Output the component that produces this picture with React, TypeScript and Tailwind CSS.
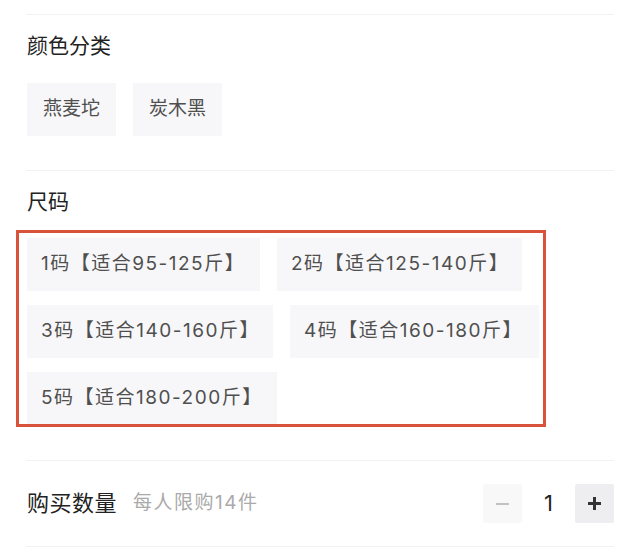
import React from "react";

const FONT = { fontFamily: 'Inter, "Noto Sans CJK SC", "Noto Sans", sans-serif' };

const sizes: { label: string; w: string }[] = [
  { label: "1码【适合95-125斤】", w: "w-[233px]" },
  { label: "2码【适合125-140斤】", w: "w-[245px]" },
  { label: "3码【适合140-160斤】", w: "w-[246px]" },
  { label: "4码【适合160-180斤】", w: "w-[249px]" },
  { label: "5码【适合180-200斤】", w: "w-[250px]" },
];

export default function App() {
  return (
    <div className="w-[640px] h-[553px] bg-white overflow-hidden" style={FONT}>
      <div className="ml-[26px] w-[588px]">
        <div className="h-[15px] border-b border-[#f2f2f2]" />

        {/* 颜色分类 */}
        <div className="pb-[34px] border-b border-[#f2f2f2]">
          <div className="mt-[16px] h-[30px] leading-[30px] text-[21px] text-[#222] pl-px">颜色分类</div>
          <div className="mt-[22px] flex gap-[17px] pl-px">
            <div className="w-[89px] h-[53px] bg-[#f7f7f9] flex items-center justify-center text-[19px] text-[#4f4f4f]">燕麦坨</div>
            <div className="w-[89px] h-[53px] bg-[#f7f7f9] flex items-center justify-center text-[19px] text-[#4f4f4f]">炭木黑</div>
          </div>
        </div>

        {/* 尺码 */}
        <div className="pb-[33px] border-b border-[#f2f2f2]">
          <div className="mt-[16px] h-[30px] leading-[30px] text-[21px] text-[#222] pl-px">尺码</div>
          <div className="mt-[13px] -ml-[10px] w-[530px] h-[197px] border-[3px] border-[#d9533c] pl-[8px] pt-[5px] overflow-hidden">
            <div className="flex flex-wrap gap-x-[17px] gap-y-[14px] w-[516px]">
              {sizes.map((s) => (
                <div
                  key={s.label}
                  className={`${s.w} h-[53px] bg-[#f7f7f9] flex items-center pl-[14px] text-[19px] tracking-[1.5px] text-[#4f4f4f] whitespace-nowrap`}
                >
                  {s.label}
                </div>
              ))}
            </div>
          </div>
        </div>

        {/* 购买数量 */}
        <div className="h-[86px] border-b border-[#f2f2f2] flex items-center">
          <div className="text-[22px] tracking-[0.5px] text-[#222] pl-px">购买数量</div>
          <div className="ml-[16px] text-[19px] tracking-[1.5px] text-[#aaa]">每人限购14件</div>
          <div className="ml-auto flex items-center">
            <div className="w-[39px] h-[39px] bg-[#f8f8f8] rounded-[2px] flex items-center justify-center">
              <div className="w-[13px] h-[2px] bg-[#c2c2c2]" />
            </div>
            <div className="w-[53px] text-center text-[22px] text-[#222]">1</div>
            <div className="w-[39px] h-[39px] bg-[#eeeef0] rounded-[2px] flex items-center justify-center relative">
              <div className="w-[13px] h-[2.5px] bg-[#333]" />
              <div className="absolute w-[2.5px] h-[13px] bg-[#333]" />
            </div>
          </div>
        </div>
      </div>
    </div>
  );
}
